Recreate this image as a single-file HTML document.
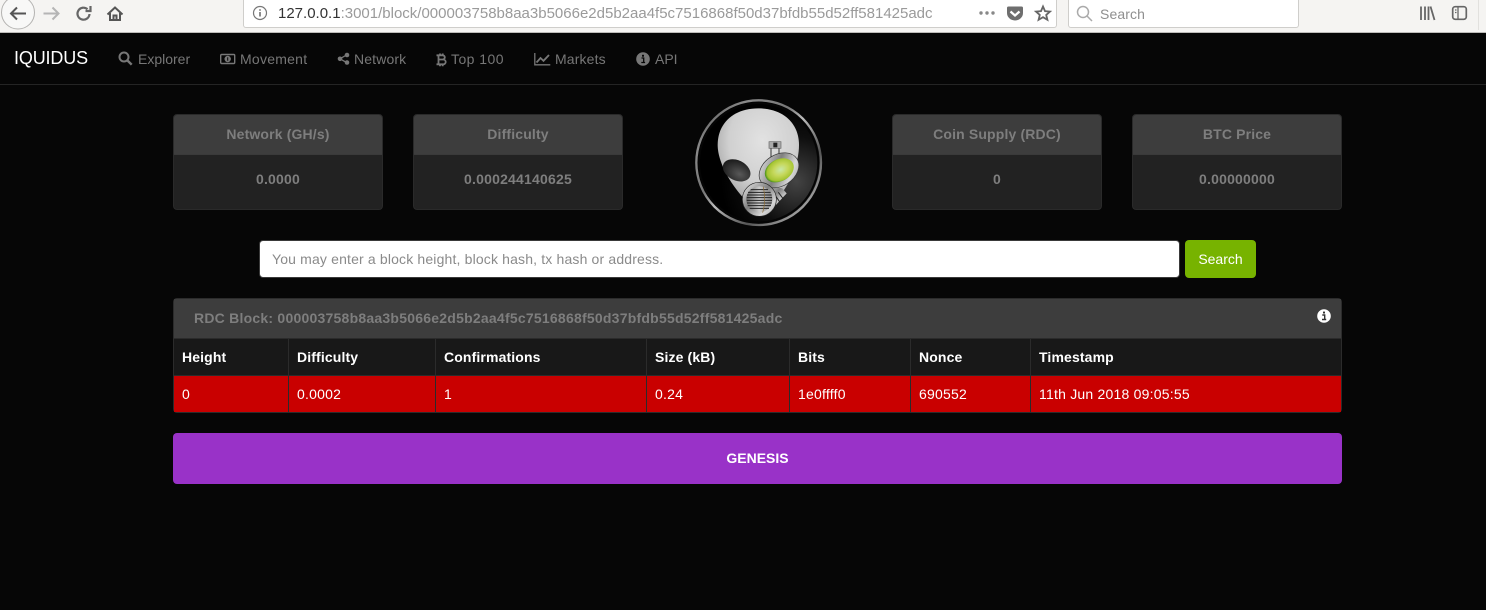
<!DOCTYPE html>
<html><head><meta charset="utf-8"><title>IQUIDUS</title>
<style>
*{box-sizing:border-box}
html,body{margin:0;padding:0;width:1486px;height:610px;overflow:hidden;background:#060606;font-family:"Liberation Sans",sans-serif}
.a{position:absolute;white-space:nowrap}
#chrome{position:absolute;left:0;top:0;width:1486px;height:33px;background:#f5f4f2;border-bottom:1px solid #bdbcb9}
.ubox{position:absolute;background:#fff;border:1px solid #cfcecb;border-top:none;border-radius:0 0 3px 3px;height:28px;top:0}
.nav{position:absolute;font-size:14px;line-height:20px;color:#777;white-space:nowrap}
.nav svg{position:absolute;left:0}
.panel{position:absolute;top:114px;width:210px;height:96px;border-radius:4px;background:#222;border:1px solid #2a2a2a;overflow:hidden;text-align:center;font-weight:bold;font-size:14px;color:#7e7e7e;letter-spacing:.15px}
.panel .h{height:40px;background:#3d3d3d;line-height:38px;border-bottom:1px solid #3a3a3a}
.panel .b{line-height:49px;letter-spacing:.2px}
.cell{position:absolute;white-space:nowrap;font-size:14px;line-height:20px}
.th{top:347px;font-weight:bold;color:#fff;letter-spacing:.13px}
.td{top:384px;color:#fff;letter-spacing:.22px}
.vl{position:absolute;width:1px}
</style></head><body>
<div id="chrome">
 <svg class="a" style="left:0;top:0" width="140" height="33" viewBox="0 0 140 33">
  <circle cx="18" cy="12.500" r="16.500" fill="#f8f8f7" stroke="#b4b3b1"/>
  <path d="M26 13.500H11M17 7.500l-6 6 6 6" fill="none" stroke="#555" stroke-width="2"/>
  <path d="M43.500 13.500H58M52.500 7.500l6 6-6 6" fill="none" stroke="#b5b5b5" stroke-width="2"/>
  <path d="M89.500 14a6 6 0 1 1-2-4.800M90.500 6v5h-5" fill="none" stroke="#666" stroke-width="2.200"/>
  <path d="M107.500 14.500L115 7.500l7.500 7M110 13v7h10v-7M113.500 20v-4.500h3V20" fill="none" stroke="#555" stroke-width="2"/>
 </svg>
 <div class="ubox" style="left:243px;width:814px"></div>
 <svg class="a" style="left:252px;top:5px" width="16" height="16" viewBox="0 0 16 16"><circle cx="8" cy="8" r="6.500" fill="none" stroke="#777" stroke-width="1.200"/><path d="M8 7v4.500M8 4.300v1.400" stroke="#666" stroke-width="1.500"/></svg>
 <div class="a" style="left:278px;top:5px;font:15px/18px 'Liberation Sans',sans-serif;color:#9a9a9a"><span style="color:#333">127.0.0.1</span>:3001/block/000003758b8aa3b5066e2d5b2aa4f5c7516868f50d37bfdb55d52ff581425adc</div>
 <svg class="a" style="left:975px;top:3px" width="80" height="22" viewBox="0 0 80 22">
  <circle cx="6" cy="10" r="1.700" fill="#888"/><circle cx="12" cy="10" r="1.700" fill="#888"/><circle cx="18" cy="10" r="1.700" fill="#888"/>
  <path d="M33.500 3.500h13a1.500 1.500 0 0 1 1.500 1.500V10a8 7.500 0 0 1-16 0V5a1.500 1.500 0 0 1 1.500-1.500z" fill="#6e6e6e"/>
  <path d="M35.500 8.500l4.500 4 4.500-4" fill="none" stroke="#fff" stroke-width="2.200"/>
  <path d="M68 3.500l2 4.600 5 .5-3.800 3.300 1.200 4.900-4.400-2.600-4.400 2.600 1.200-4.900-3.800-3.300 5-.5z" fill="none" stroke="#666" stroke-width="1.800"/>
 </svg>
 <div class="ubox" style="left:1068px;width:231px"></div>
 <svg class="a" style="left:1075px;top:3px" width="20" height="20" viewBox="0 0 20 20"><circle cx="8" cy="9" r="5.500" fill="none" stroke="#aaa" stroke-width="1.500"/><path d="M12 13l5 5" stroke="#aaa" stroke-width="1.500"/></svg>
 <div class="a" style="left:1100px;top:5px;font:14px/18px 'Liberation Sans',sans-serif;letter-spacing:.1px;color:#8f8f8f">Search</div>
 <svg class="a" style="left:1415px;top:3px" width="60" height="22" viewBox="0 0 60 22">
  <path d="M6 3.500v13.500M10 3.500v13.500M13.500 3.500v13.500M15.500 3.500l4 13.500" fill="none" stroke="#666" stroke-width="1.800"/>
  <rect x="37.700" y="3.700" width="13.600" height="12.600" rx="2.500" fill="none" stroke="#666" stroke-width="1.700"/>
  <path d="M43 3.700v12.600M40 7h1.500M40 9.500h1.500" stroke="#666" stroke-width="1.300"/>
 </svg>
 <div class="a" style="left:1478px;top:0;width:1px;height:30px;background:#e2e1de"></div>
</div>

<div class="a" style="left:0;top:84px;width:1486px;height:1px;background:#242424"></div>
<div class="a" style="left:14px;top:48px;font-size:18px;line-height:20px;color:#fff;letter-spacing:-.15px">IQUIDUS</div>

<div class="nav" style="left:118px;top:49px;padding-left:20px">Explorer<svg width="15" height="15" viewBox="0 0 15 15" style="top:2px"><circle cx="6" cy="6" r="4.500" fill="none" stroke="#777" stroke-width="2"/><path d="M9.500 9.500l4.200 4.200" stroke="#777" stroke-width="2.400"/></svg></div>
<div class="nav" style="left:220px;top:49px;padding-left:20px;letter-spacing:.25px">Movement<svg width="16" height="14" viewBox="0 0 16 14" style="top:4px"><rect x=".7" y="1.500" width="14" height="9" rx="1" fill="none" stroke="#777" stroke-width="1.400"/><circle cx="7.700" cy="6" r="3.200" fill="#777"/><path d="M7.700 4.300v3.400" stroke="#060606" stroke-width="1"/></svg></div>
<div class="nav" style="left:337px;top:49px;padding-left:17px;letter-spacing:.14px">Network<svg width="14" height="14" viewBox="0 0 14 14" style="top:3px"><path d="M9.500 3L3 6.800l6.500 3.700" fill="none" stroke="#777" stroke-width="1.300"/><circle cx="3" cy="6.800" r="2.300" fill="#777"/><circle cx="10" cy="3" r="2.300" fill="#777"/><circle cx="10" cy="10.500" r="2.300" fill="#777"/></svg></div>
<div class="nav" style="left:436px;top:49px;padding-left:15px;letter-spacing:.45px">Top 100<svg width="11" height="14" viewBox="0 0 11 14" style="top:4px"><path d="M2.500 2.300v9M.5 2.300h6.200a2.100 2.100 0 0 1 0 4.200H2.500h4.800a2.400 2.400 0 0 1 0 4.800H.5M4 .5v1.800M6.700.5v1.800M4 11.300v2M6.700 11.300v2" fill="none" stroke="#777" stroke-width="1.800"/></svg></div>
<div class="nav" style="left:534px;top:49px;padding-left:21px;letter-spacing:.14px">Markets<svg width="17" height="14" viewBox="0 0 17 14" style="top:3px"><path d="M.8 1v11.800h15.500" fill="none" stroke="#777" stroke-width="1.300"/><path d="M2.500 10.500l4-4.500 3 2.800 5.500-5.800" fill="none" stroke="#777" stroke-width="1.800"/></svg></div>
<div class="nav" style="left:636px;top:49px;padding-left:19px">API<svg width="14" height="14" viewBox="0 0 14 14" style="top:3px"><circle cx="7" cy="7" r="6.800" fill="#777"/><path d="M5.500 6h2.200v4M5.300 10.500h3.800" fill="none" stroke="#060606" stroke-width="1.300"/><rect x="6" y="2.800" width="2" height="1.900" fill="#060606"/></svg></div>

<div class="panel" style="left:173px"><div class="h">Network (GH/s)</div><div class="b">0.0000</div></div>
<div class="panel" style="left:413px"><div class="h">Difficulty</div><div class="b">0.000244140625</div></div>
<div class="panel" style="left:892px"><div class="h">Coin Supply (RDC)</div><div class="b">0</div></div>
<div class="panel" style="left:1132px"><div class="h">BTC Price</div><div class="b">0.00000000</div></div>

<svg class="a" style="left:695px;top:95px" width="130" height="135" viewBox="0 0 390 405">
 <defs>
  <linearGradient id="ring" x1="0" y1="0" x2="1" y2="1"><stop offset="0" stop-color="#444"/><stop offset=".2" stop-color="#8a8a8a"/><stop offset=".4" stop-color="#777"/><stop offset=".5" stop-color="#bbb"/><stop offset=".7" stop-color="#555"/><stop offset=".85" stop-color="#999"/><stop offset="1" stop-color="#ddd"/></linearGradient>
  <radialGradient id="bg" cx=".8" cy=".65" r=".6"><stop offset="0" stop-color="#444"/><stop offset=".6" stop-color="#0e0e0e"/><stop offset="1" stop-color="#000"/></radialGradient>
  <radialGradient id="head" cx=".55" cy=".32" r=".75"><stop offset="0" stop-color="#e2e2e2"/><stop offset=".55" stop-color="#d0d0d0"/><stop offset=".85" stop-color="#a8a8a8"/><stop offset="1" stop-color="#777"/></radialGradient>
  <radialGradient id="eye" cx=".65" cy=".6" r=".65"><stop offset="0" stop-color="#585858"/><stop offset="1" stop-color="#1c1c1c"/></radialGradient>
  <radialGradient id="green" cx=".55" cy=".5" r=".55"><stop offset="0" stop-color="#c8e8a8"/><stop offset=".45" stop-color="#c6d85c"/><stop offset=".85" stop-color="#a4c431"/><stop offset="1" stop-color="#3d8a18"/></radialGradient>
  <linearGradient id="metal" x1="0" y1="0" x2="1" y2="1"><stop offset="0" stop-color="#f0f0f0"/><stop offset=".45" stop-color="#808080"/><stop offset=".75" stop-color="#d8d8d8"/><stop offset="1" stop-color="#999"/></linearGradient>
  <linearGradient id="grill" x1="0" y1="0" x2="1" y2="0"><stop offset="0" stop-color="#666"/><stop offset=".5" stop-color="#ccc"/><stop offset="1" stop-color="#888"/></linearGradient>
 </defs>
 <circle cx="191" cy="203" r="187" fill="url(#bg)" stroke="url(#ring)" stroke-width="7"/>
 <circle cx="191" cy="203" r="179" fill="none" stroke="#050505" stroke-width="6"/>
 <path d="M190 40C265 40 312 85 312 150C312 205 285 270 240 320L185 345C130 305 68 215 68 150C68 85 115 40 190 40z" fill="url(#head)"/>
 <ellipse cx="125" cy="226" rx="44" ry="30" transform="rotate(27 125 226)" fill="url(#eye)"/>
 <path d="M222 140h36v20h-36z" fill="#aaa" stroke="#666" stroke-width="2"/>
 <rect x="235" y="143" width="12" height="14" fill="#222"/>
 <path d="M228 160v35M252 160v25" stroke="#333" stroke-width="3" fill="none"/>
 <path d="M205 270L262 280 275 295 238 335 215 320z" fill="url(#metal)"/>
 <path d="M240 300l15 22M250 292l15 20" stroke="#222" stroke-width="3"/>
 <ellipse cx="252" cy="226" rx="64" ry="47" transform="rotate(-33 252 226)" fill="url(#metal)" stroke="#333" stroke-width="2"/>
 <ellipse cx="253" cy="226" rx="46" ry="33" transform="rotate(-28 253 226)" fill="url(#green)"/>
 <circle cx="193" cy="313" r="51" fill="url(#metal)" stroke="#222" stroke-width="2"/>
 <circle cx="193" cy="313" r="39" fill="url(#grill)"/>
 <path d="M167 284H219M159 292H227M156 300H230M155 308H231M155 316H231M156 324H230M158 332H228M164 340H222" stroke="#222" stroke-width="3"/>
 <path d="M205 275c5 25 5 55-2 78" stroke="#8a6a30" stroke-width="2" fill="none"/>
</svg>

<div class="a" style="left:259px;top:240px;width:921px;height:38px;background:#fff;border:1px solid #3a3a3a;border-radius:4px;font-size:14px;line-height:36px;color:#8a8a8a;padding-left:12px;letter-spacing:.16px">You may enter a block height, block hash, tx hash or address.</div>
<div class="a" style="left:1185px;top:240px;width:71px;height:38px;background:#77b300;border-radius:4px;font-size:14px;line-height:38px;color:#fff;text-align:center">Search</div>

<div class="a" style="left:173px;top:298px;width:1169px;height:115px;background:#2b2b2b;border-radius:4px;overflow:hidden">
 <div class="a" style="left:1px;top:1px;width:1167px;height:39px;background:#3d3d3d"></div>
 <div class="a" style="left:1px;top:41px;width:1167px;height:36px;background:#181818"></div>
 <div class="a" style="left:1px;top:78px;width:1167px;height:36px;background:#c90000"></div>
</div>
<div class="a" style="left:194px;top:308px;font-size:14px;line-height:20px;font-weight:bold;color:#7e7e7e;letter-spacing:.23px">RDC Block: 000003758b8aa3b5066e2d5b2aa4f5c7516868f50d37bfdb55d52ff581425adc</div>
<svg class="a" style="left:1317px;top:309px" width="14" height="14" viewBox="0 0 14 14"><circle cx="7" cy="7" r="6.800" fill="#fff"/><path d="M5.300 6h2.400v4.300M5 10.500h4.200" fill="none" stroke="#333" stroke-width="1.400"/><rect x="6" y="2.600" width="2" height="1.900" fill="#333"/></svg>

<div class="vl" style="left:288px;top:339px;height:73px;background:#2b2b2b"></div>
<div class="vl" style="left:435px;top:339px;height:73px;background:#2b2b2b"></div>
<div class="vl" style="left:646px;top:339px;height:73px;background:#2b2b2b"></div>
<div class="vl" style="left:789px;top:339px;height:73px;background:#2b2b2b"></div>
<div class="vl" style="left:910px;top:339px;height:73px;background:#2b2b2b"></div>
<div class="vl" style="left:1030px;top:339px;height:73px;background:#2b2b2b"></div>

<div class="cell th" style="left:182px">Height</div>
<div class="cell th" style="left:297px">Difficulty</div>
<div class="cell th" style="left:444px">Confirmations</div>
<div class="cell th" style="left:655px">Size (kB)</div>
<div class="cell th" style="left:798px">Bits</div>
<div class="cell th" style="left:919px">Nonce</div>
<div class="cell th" style="left:1039px">Timestamp</div>
<div class="cell td" style="left:182px">0</div>
<div class="cell td" style="left:297px">0.0002</div>
<div class="cell td" style="left:444px">1</div>
<div class="cell td" style="left:655px">0.24</div>
<div class="cell td" style="left:798px">1e0ffff0</div>
<div class="cell td" style="left:919px">690552</div>
<div class="cell td" style="left:1039px">11th Jun 2018 09:05:55</div>

<div class="a" style="left:173px;top:433px;width:1169px;height:51px;background:#9932c8;border-radius:4px;text-align:center;font-size:14px;line-height:51px;font-weight:bold;color:#fff">GENESIS</div>
</body></html>
